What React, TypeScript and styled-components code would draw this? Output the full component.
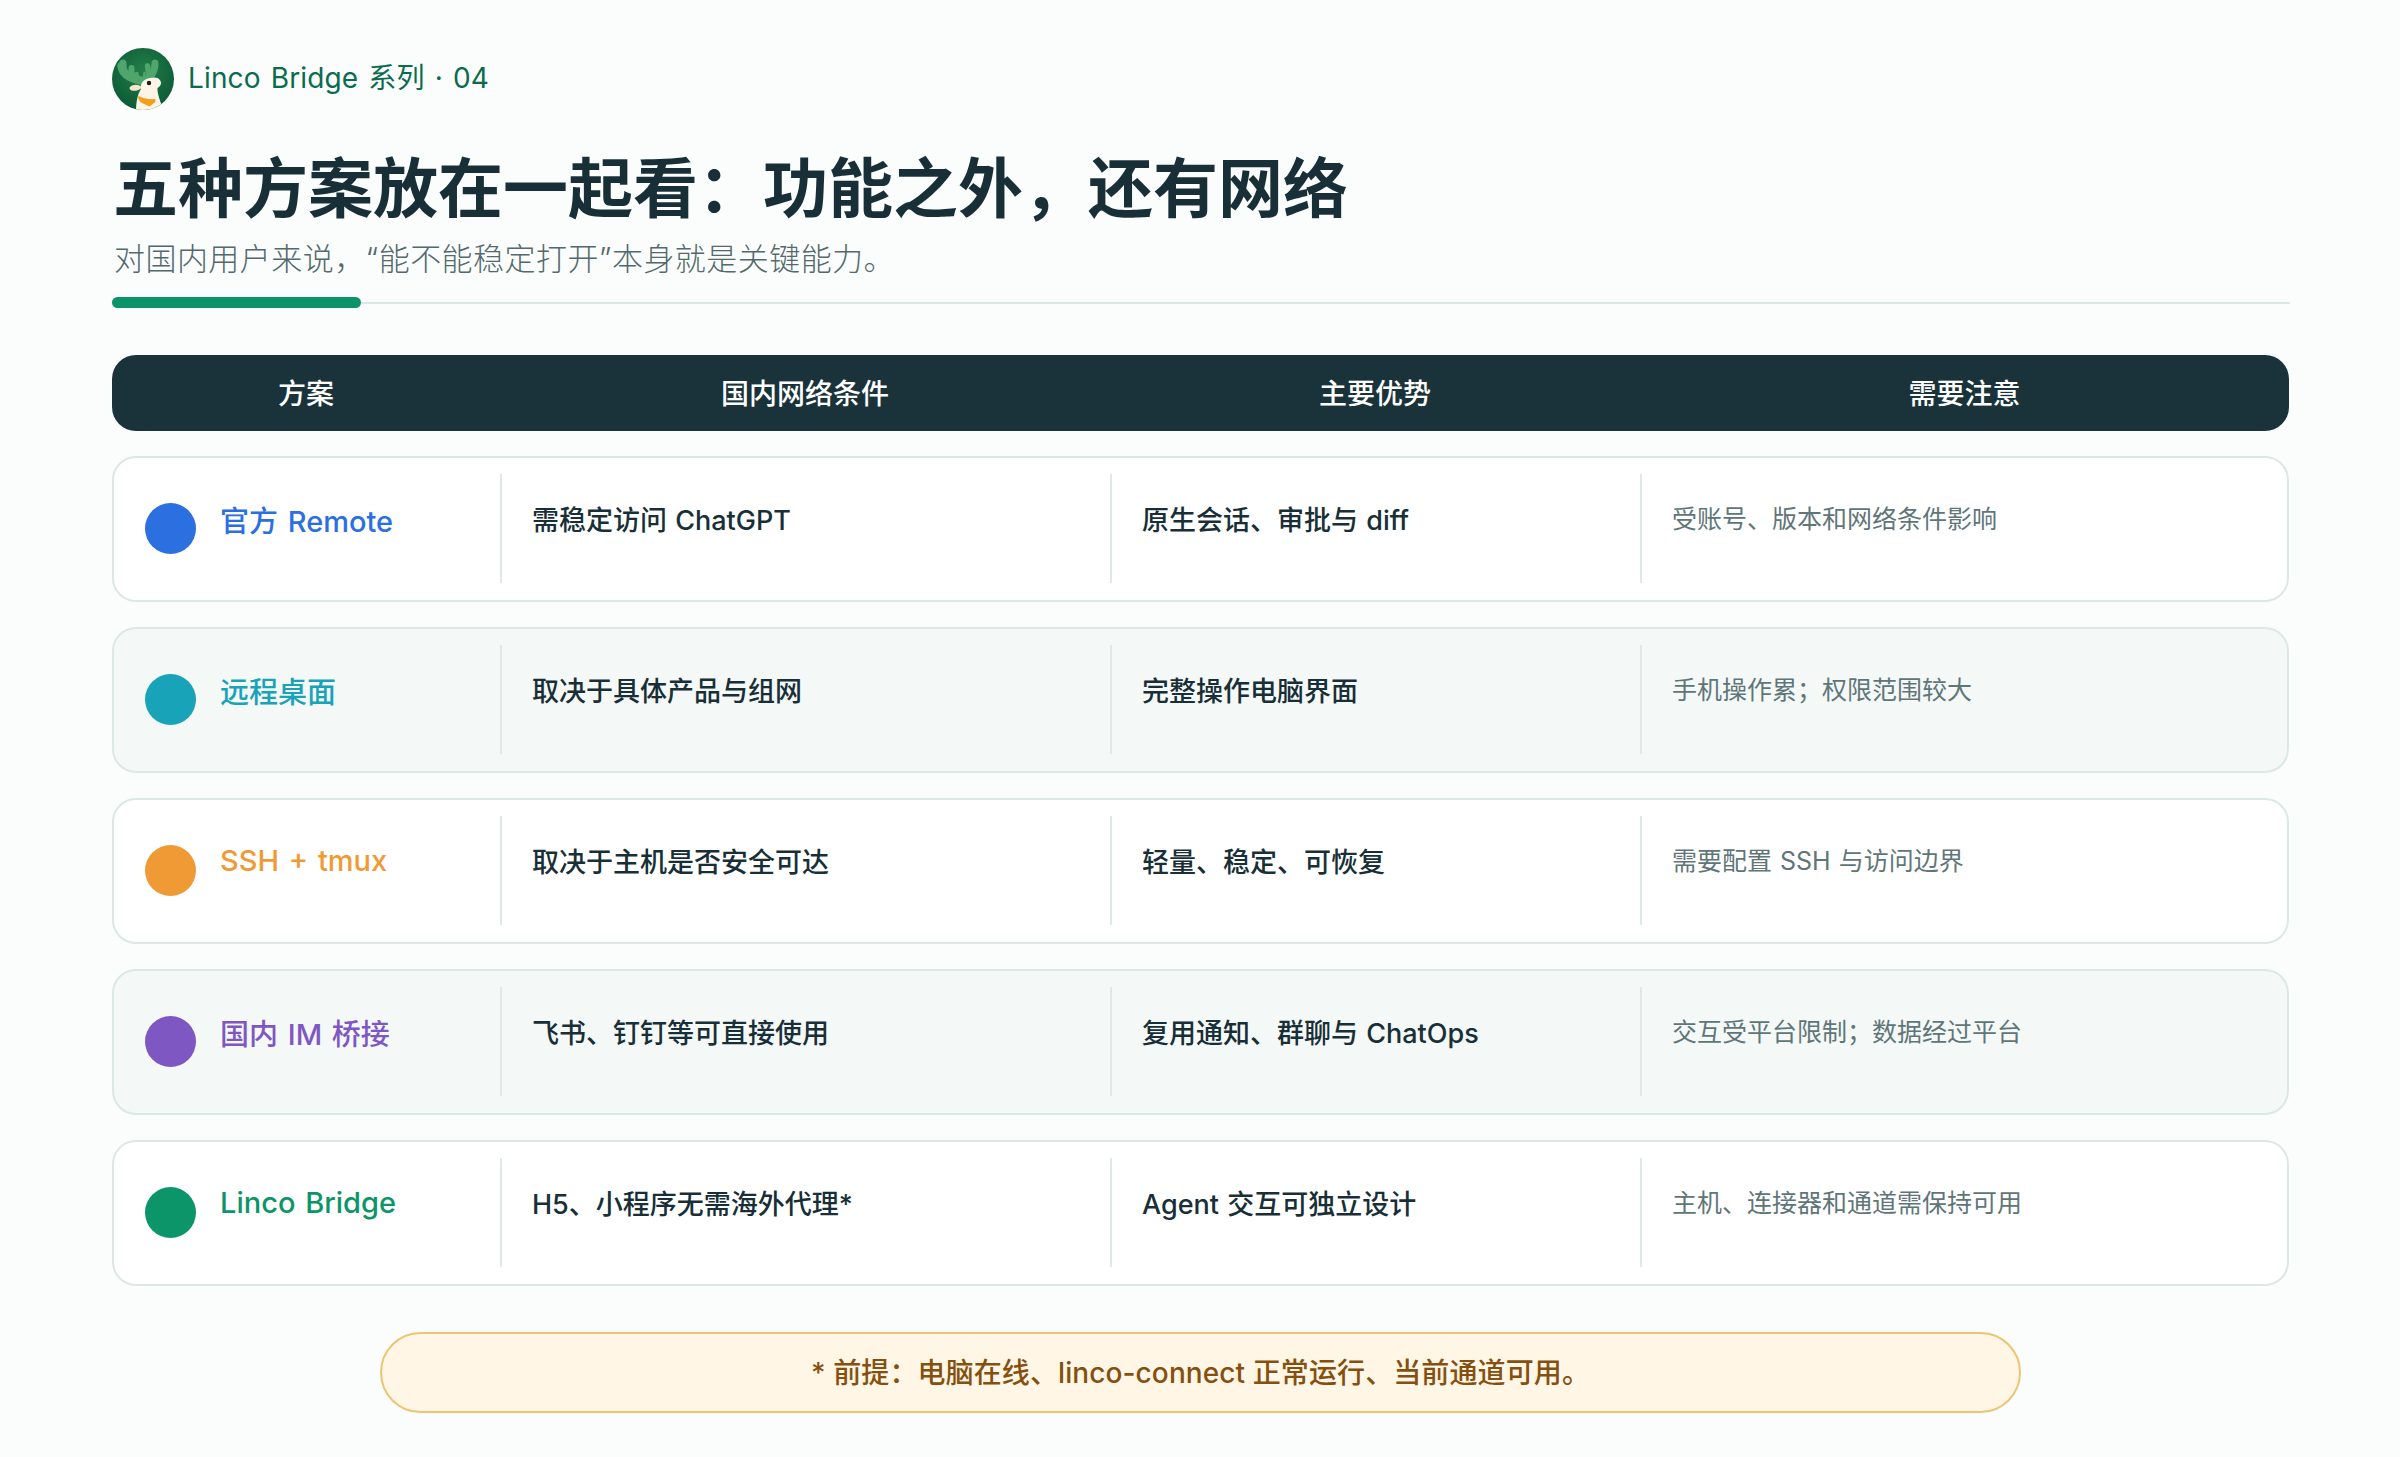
import styled, { createGlobalStyle } from "styled-components";

const GlobalStyle = createGlobalStyle`
    html, body {
        margin: 0;
        padding: 0;
        background: #fbfdfc;
    }
    body {
        font-family: "Inter", "Noto Sans CJK SC", sans-serif;
        color: #182f37;
    }
`;

const Page = styled.div`
    box-sizing: border-box;
    width: 2400px;
    height: 1457px;
    padding: 48px 111px 0 112px;
`;

const Brand = styled.div`
    display: flex;
    align-items: center;
    gap: 14px;
    height: 62px;
`;

const BrandText = styled.span`
    margin-top: -6px;
    font-size: 28px;
    letter-spacing: 0.15px;
    word-spacing: 2px;
    color: #0a6b4f;
`;

const Title = styled.h1`
    margin: 39px 0 0 1px;
    font-size: 65px;
    line-height: 80px;
    font-weight: 600;
    color: #182f37;
`;

const Subtitle = styled.p`
    margin: 8px 0 0 2px;
    font-size: 31px;
    line-height: 44px;
    font-weight: 300;
    letter-spacing: 0.45px;
    color: #53696d;
`;

const Rule = styled.div`
    position: relative;
    height: 2px;
    margin: 21px -1px 51px 0;
    background: #d9e8e4;

    &::before {
        content: "";
        position: absolute;
        left: 0;
        top: -5px;
        width: 249px;
        height: 11px;
        border-radius: 6px;
        background: #0b9469;
    }
`;

const TableHeader = styled.div`
    display: grid;
    grid-template-columns: 388px 610px 530px 649px;
    align-items: center;
    height: 76px;
    padding-bottom: 2px;
    box-sizing: border-box;
    border-radius: 24px;
    background: #1a333b;
`;

const HeaderCell = styled.div`
    text-align: center;
    font-size: 28px;
    font-weight: 500;
    color: #ffffff;
`;

const Rows = styled.div`
    display: flex;
    flex-direction: column;
    gap: 25px;
    margin-top: 25px;
`;

const Row = styled.div<{ $alt: boolean }>`
    box-sizing: border-box;
    display: grid;
    grid-template-columns: 386px 610px 530px 647px;
    height: 146px;
    padding: 16px 0 17px;
    border: 2px solid #dbe8e5;
    border-radius: 24px;
    background: ${(props) => (props.$alt ? "#f4f8f7" : "#ffffff")};
`;

const NameCell = styled.div`
    display: flex;
    align-items: center;
    gap: 24px;
    padding-left: 31px;
`;

const Dot = styled.span<{ $color: string }>`
    flex: none;
    width: 51px;
    height: 51px;
    border-radius: 50%;
    background: ${(props) => props.$color};
`;

const Name = styled.span<{ $color: string }>`
    margin-top: -20px;
    font-size: 29px;
    font-weight: 500;
    word-spacing: 2px;
    color: ${(props) => props.$color};
`;

const Cell = styled.div`
    padding: 27px 0 0 30px;
    border-left: 2px solid #dfeae8;
    font-size: 27px;
    line-height: 40px;
    font-weight: 500;
    word-spacing: 1px;
    color: #182f37;
`;

const NoteCell = styled(Cell)`
    padding-top: 25px;
    font-size: 25px;
    font-weight: 400;
    color: #5f7679;
`;

const Footnote = styled.div`
    box-sizing: border-box;
    display: flex;
    align-items: center;
    justify-content: center;
    width: 1641px;
    height: 81px;
    margin: 46px auto 0;
    padding-bottom: 3px;
    border: 2px solid #ecc573;
    border-radius: 41px;
    background: #fff6e6;
    font-size: 28px;
    font-weight: 500;
    letter-spacing: 0.1px;
    color: #85500f;
`;

const plans = [
    {
        name: "官方 Remote",
        color: "#2b6fe0",
        network: "需稳定访问 ChatGPT",
        strength: "原生会话、审批与 diff",
        note: "受账号、版本和网络条件影响",
    },
    {
        name: "远程桌面",
        color: "#18a3b9",
        network: "取决于具体产品与组网",
        strength: "完整操作电脑界面",
        note: "手机操作累；权限范围较大",
    },
    {
        name: "SSH + tmux",
        color: "#f09a36",
        network: "取决于主机是否安全可达",
        strength: "轻量、稳定、可恢复",
        note: "需要配置 SSH 与访问边界",
    },
    {
        name: "国内 IM 桥接",
        color: "#7f57c2",
        network: "飞书、钉钉等可直接使用",
        strength: "复用通知、群聊与 ChatOps",
        note: "交互受平台限制；数据经过平台",
    },
    {
        name: "Linco Bridge",
        color: "#0c9568",
        network: "H5、小程序无需海外代理*",
        strength: "Agent 交互可独立设计",
        note: "主机、连接器和通道需保持可用",
    },
];

const Logo = () => (
    <svg width="62" height="62" viewBox="0 0 62 62" style={{ flex: "none" }}>
        <defs>
            <radialGradient id="logoBg" cx="0.5" cy="0.38" r="0.62">
                <stop offset="0" stopColor="#237f49" />
                <stop offset="1" stopColor="#0c5a36" />
            </radialGradient>
            <clipPath id="logoClip">
                <circle cx="31" cy="31" r="31" />
            </clipPath>
        </defs>
        <circle cx="31" cy="31" r="31" fill="url(#logoBg)" />
        <g clipPath="url(#logoClip)">
            <g fill="none" stroke="#4fa56c" strokeLinecap="round" strokeLinejoin="round">
                <path d="M30 33 C22 31 11 28 9.5 18" strokeWidth="8.5" />
                <path d="M11 22 L11 15" strokeWidth="7" />
                <path d="M19.5 27 L19.5 20" strokeWidth="6" />
                <path d="M25 31 L24.5 26" strokeWidth="4.5" />
                <path d="M32 33 C37 29 43 27 43 15" strokeWidth="7" />
                <path d="M37 27 L35.5 18" strokeWidth="5.5" />
                <path d="M31.5 33 L32.5 25" strokeWidth="2.5" />
            </g>
            <path
                d="M18 39 C21 36 26 36 30 39 C28 42.5 22 43.5 19.5 42.5 C17.5 41.5 17 40 18 39 Z"
                fill="#f6e3c8"
            />
            <path
                d="M24 64 C24 56 25 47 29 41 C28 36 31 31 38 30 C42 29 47 29 48.5 33 C50 36 48 39 45.5 40 C45 46 49 55 52 64 Z"
                fill="#fcf4e6"
            />
            <path
                d="M26 48 C31 50.5 37 51.5 43 51 C44 52.5 43.5 54 42 55 L37.5 58.5 L30 55 C27.5 53.5 26 51 26 48 Z"
                fill="#f59e1b"
            />
            <circle cx="37" cy="35" r="2.2" fill="#1b1b1b" />
        </g>
    </svg>
);

export default function App() {
    return (
        <Page>
            <GlobalStyle />
            <Brand>
                <Logo />
                <BrandText>Linco Bridge 系列 · 04</BrandText>
            </Brand>
            <Title>五种方案放在一起看：功能之外，还有网络</Title>
            <Subtitle>对国内用户来说，“能不能稳定打开”本身就是关键能力。</Subtitle>
            <Rule />
            <TableHeader>
                <HeaderCell>方案</HeaderCell>
                <HeaderCell>国内网络条件</HeaderCell>
                <HeaderCell>主要优势</HeaderCell>
                <HeaderCell>需要注意</HeaderCell>
            </TableHeader>
            <Rows>
                {plans.map((plan, index) => (
                    <Row key={plan.name} $alt={index % 2 === 1}>
                        <NameCell>
                            <Dot $color={plan.color} />
                            <Name $color={plan.color}>{plan.name}</Name>
                        </NameCell>
                        <Cell>{plan.network}</Cell>
                        <Cell>{plan.strength}</Cell>
                        <NoteCell>{plan.note}</NoteCell>
                    </Row>
                ))}
            </Rows>
            <Footnote>* 前提：电脑在线、linco-connect 正常运行、当前通道可用。</Footnote>
        </Page>
    );
}
